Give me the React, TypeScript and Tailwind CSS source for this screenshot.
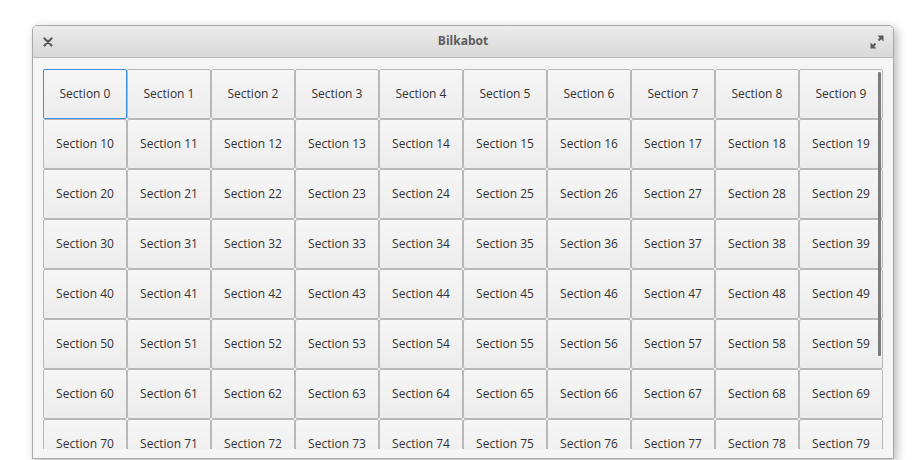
import React from "react";

const sections = Array.from({ length: 80 }, (_, i) => i);

export default function App() {
  return (
    <div className="w-[921px] h-[460px] bg-white overflow-hidden" style={{ fontFamily: '"Open Sans", "Noto Sans", sans-serif' }}>
      <div className="ml-[32px] mt-[25px] w-[862px] h-[434px] flex flex-col border border-[#a9a9a9] rounded-t-[5px] bg-[#f5f5f5] shadow-[3px_3px_10px_rgba(0,0,0,0.28)] overflow-hidden">
        {/* titlebar */}
        <div className="h-[32px] shrink-0 grid grid-cols-[1fr_auto_1fr] items-center px-[9px] border-b border-[#b9b9b9] bg-gradient-to-b from-[#ececec] to-[#d8d8d8]">
          <svg width="10" height="10" viewBox="0 0 10 10" className="ml-[1px]">
            <path d="M1.5 1.5 L8.5 8.5 M8.5 1.5 L1.5 8.5" stroke="#5a5a5a" strokeWidth="2.2" strokeLinecap="round" />
          </svg>
          <span className="text-[12px] font-bold text-[#5d5d5d] -mt-[1px]">Bilkabot</span>
          <svg width="14" height="14" viewBox="0 0 14 14" className="justify-self-end">
            <path d="M7.5 0.5 H13.5 V6.5 Z M0.5 7.5 V13.5 H6.5 Z" fill="#5a5a5a" />
            <path d="M12 2 L8.5 5.5 M2 12 L5.5 8.5" stroke="#5a5a5a" strokeWidth="2" />
          </svg>
        </div>
        {/* content */}
        <div className="flex-1 px-[10px] pt-[11px] pb-[9px]">
          <div className="relative h-[380px] overflow-hidden">
            <div className="grid grid-cols-[repeat(10,84px)] auto-rows-[50px]">
              {sections.map((i) => (
                <div
                  key={i}
                  className={
                    i === 0
                      ? "flex items-center justify-center rounded-[2px] border border-[#3d8fe3] bg-gradient-to-b from-[#f6f6f6] to-[#ececec] text-[12px] text-[#333]"
                      : "flex items-center justify-center rounded-[2px] border border-[#b8b8b8] bg-gradient-to-b from-[#f6f6f6] to-[#ececec] text-[12px] text-[#333]"
                  }
                >
                  Section {i}
                </div>
              ))}
            </div>
            <div className="absolute left-[835px] top-[3px] w-[3px] h-[284px] rounded-[1px] bg-[#7c7c7c]" />
          </div>
        </div>
      </div>
    </div>
  );
}
